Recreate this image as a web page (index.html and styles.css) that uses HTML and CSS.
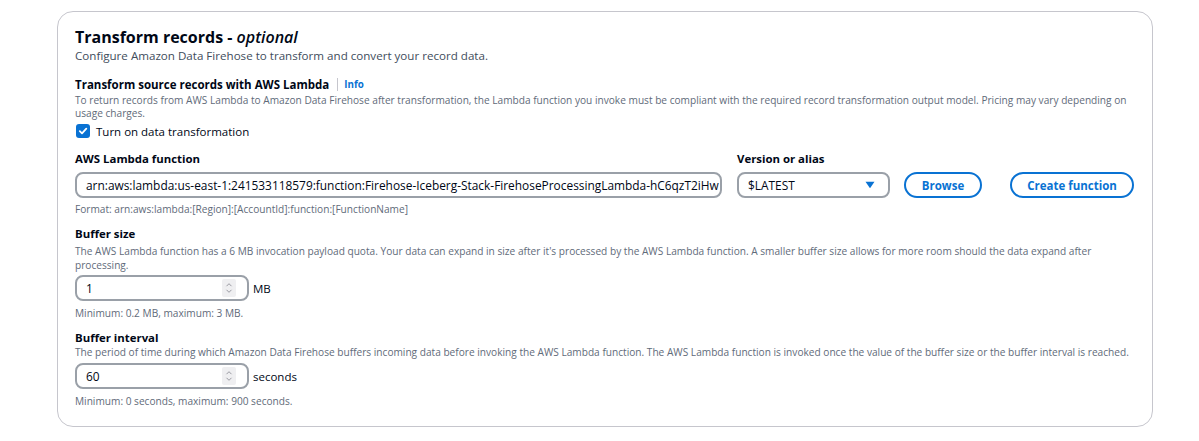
FILE: index.html
```html
<!DOCTYPE html>
<html>
<head>
<meta charset="utf-8">
<link rel="stylesheet" href="styles.css">
</head>
<body>
<div class="page">
  <section class="panel">
    <h2 class="title">Transform records - <em>optional</em></h2>
    <p class="desc">Configure Amazon Data Firehose to transform and convert your record data.</p>

    <div class="subhead">
      <span class="subhead-text">Transform source records with AWS Lambda</span>
      <span class="sep"></span>
      <a class="info">Info</a>
    </div>
    <p class="hint multi">To return records from AWS Lambda to Amazon Data Firehose after transformation, the Lambda function you invoke must be compliant with the required record transformation output model. Pricing may vary depending on usage charges.</p>

    <label class="check-row">
      <span class="checkbox">
        <svg width="10" height="10" viewBox="0 0 10 10"><path d="M1.8 5.2 L4 7.3 L8.3 2.6" fill="none" stroke="#fff" stroke-width="1.8" stroke-linecap="round" stroke-linejoin="round"/></svg>
      </span>
      <span class="check-label">Turn on data transformation</span>
    </label>

    <div class="lambda-row">
      <div class="field fn-field">
        <div class="label">AWS Lambda function</div>
        <div class="input text-input">arn:aws:lambda:us-east-1:241533118579:function:Firehose-Iceberg-Stack-FirehoseProcessingLambda-hC6qzT2iHw</div>
        <div class="hint">Format: arn:aws:lambda:[Region]:[AccountId]:function:[FunctionName]</div>
      </div>
      <div class="field ver-field">
        <div class="label">Version or alias</div>
        <div class="input select">
          <span>$LATEST</span>
          <svg class="caret" width="10" height="8" viewBox="0 0 10 8"><path d="M0.5 0.8 H9.5 L5 7.2 Z" fill="#0972d3"/></svg>
        </div>
      </div>
      <button class="btn browse">Browse</button>
      <button class="btn create">Create function</button>
    </div>

    <div class="field block buf-size">
      <div class="label">Buffer size</div>
      <p class="hint multi">The AWS Lambda function has a 6 MB invocation payload quota. Your data can expand in size after it's processed by the AWS Lambda function. A smaller buffer size allows for more room should the data expand after processing.</p>
      <div class="num-row">
        <div class="input num-input">
          <span>1</span>
          <span class="spin"><svg width="14" height="18" viewBox="0 0 14 18"><rect x="0" y="0" width="14" height="18" rx="2" fill="#efeff1"/><path d="M4.5 7.2 L7 4.7 L9.5 7.2 M4.5 10.8 L7 13.3 L9.5 10.8" fill="none" stroke="#9a9aa2" stroke-width="1"/></svg></span>
        </div>
        <span class="unit">MB</span>
      </div>
      <div class="hint">Minimum: 0.2 MB, maximum: 3 MB.</div>
    </div>

    <div class="field block buf-int">
      <div class="label">Buffer interval</div>
      <p class="hint multi">The period of time during which Amazon Data Firehose buffers incoming data before invoking the AWS Lambda function. The AWS Lambda function is invoked once the value of the buffer size or the buffer interval is reached.</p>
      <div class="num-row">
        <div class="input num-input">
          <span>60</span>
          <span class="spin"><svg width="14" height="18" viewBox="0 0 14 18"><rect x="0" y="0" width="14" height="18" rx="2" fill="#efeff1"/><path d="M4.5 7.2 L7 4.7 L9.5 7.2 M4.5 10.8 L7 13.3 L9.5 10.8" fill="none" stroke="#9a9aa2" stroke-width="1"/></svg></span>
        </div>
        <span class="unit">seconds</span>
      </div>
      <div class="hint">Minimum: 0 seconds, maximum: 900 seconds.</div>
    </div>
  </section>
</div>
</body>
</html>
```

FILE: styles.css
```css
* { box-sizing: border-box; }
html, body { margin: 0; padding: 0; background: #ffffff; }
body {
  font-family: "Open Sans", "Noto Sans", sans-serif;
  color: #000716;
}
.page {
  padding: 11px 46px 0 57px;
}
.panel {
  border: 1px solid #c6c6cd;
  border-radius: 16px;
  padding: 14px 17px 18px 17px;
  display: flex;
  flex-direction: column;
}
.title {
  margin: 0;
  font-size: 16px;
  line-height: 22px;
  font-weight: 700;
  color: #000716;
}
.title em { font-weight: 600; font-style: italic; }
.desc {
  margin: 0;
  font-size: 11.6px;
  line-height: 16px;
  color: #414d5c;
}
.subhead {
  margin-top: 12px;
  display: flex;
  align-items: center;
  height: 16px;
}
.subhead-text {
  font-size: 11.5px;
  font-weight: 700;
  color: #000716;
}
.sep {
  width: 1px;
  height: 13px;
  background: #c6c6cd;
  margin: 0 6px 0 8px;
}
.info {
  font-size: 9.8px;
  font-weight: 700;
  color: #0972d3;
}
.hint {
  margin: 0;
  font-size: 10.15px;
  line-height: 13px;
  color: #5f6b7a;
}
.subhead + .hint { margin-top: 2px; }
.check-row {
  display: flex;
  align-items: center;
  margin-top: 3px;
  height: 16px;
}
.checkbox {
  width: 14px;
  height: 14px;
  border-radius: 3px;
  background: #0972d3;
  display: flex;
  align-items: center;
  justify-content: center;
  margin-left: 1px;
  margin-right: 6px;
}
.check-label {
  font-size: 11.5px;
  color: #000716;
}
.label {
  font-size: 11.4px;
  line-height: 16px;
  font-weight: 700;
  color: #000716;
}
.lambda-row {
  display: flex;
  align-items: flex-start;
  margin-top: 12px;
}
.field { display: flex; flex-direction: column; }
.fn-field { width: 647px; margin-right: 15px; }
.ver-field { width: 153px; margin-right: 14px; }
.input {
  height: 26px;
  border: 2px solid #9aa0a8;
  border-radius: 8px;
  display: flex;
  align-items: center;
  padding: 0 9px;
  font-size: 11.9px;
  color: #000716;
  white-space: nowrap;
  overflow: hidden;
}
.lambda-row .input { margin-top: 5px; }
.lambda-row .hint { margin-top: 5px; }
.select { justify-content: space-between; padding-right: 13px; }
.btn {
  margin-top: 21px;
  height: 26px;
  border: 2px solid #0972d3;
  border-radius: 20px;
  background: #fff;
  color: #0972d3;
  font-family: inherit;
  font-size: 11.5px;
  font-weight: 700;
  padding: 0;
}
.browse { width: 78px; margin-right: 28px; }
.create { width: 124px; }
.buf-size { margin-top: 10px; }
.buf-size .hint.multi { margin-top: 2px; line-height: 14px; }
.buf-int { margin-top: 10px; }
.buf-int .hint.multi { margin-top: 0; }
.num-row {
  display: flex;
  align-items: center;
  margin-top: 4px;
}
.buf-size .num-row { margin-top: 3px; }
.num-input {
  width: 174px;
  justify-content: space-between;
  padding-right: 11px;
}
.spin { display: flex; }
.unit {
  margin-left: 4px;
  font-size: 11.5px;
  color: #000716;
}
.num-row + .hint { margin-top: 6px; }
```
